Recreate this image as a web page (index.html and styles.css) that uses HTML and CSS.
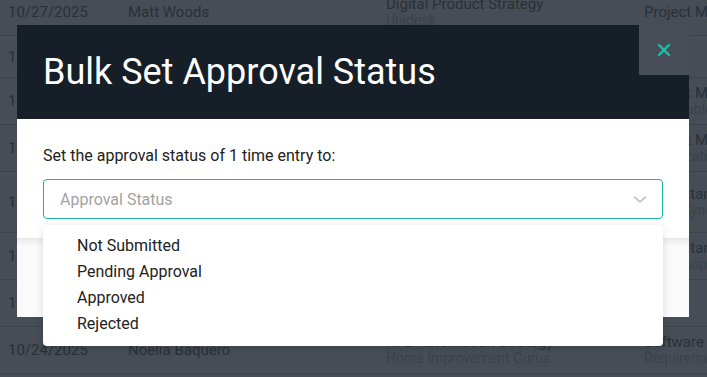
FILE: index.html
```html
<!DOCTYPE html>
<html lang="en">
<head>
    <meta charset="UTF-8">
    <meta name="viewport" content="width=device-width, initial-scale=1.0">
    <title>Time Entries</title>
    <link rel="stylesheet" href="styles.css">
</head>
<body>
    <div class="table">
        <div class="row">
            <div>10/27/2025</div>
            <div>Matt Woods</div>
            <div><div>Digital Product Strategy</div><div class="sub">Unidesk</div></div>
            <div>Project Manager</div>
        </div>
        <div class="row short">
            <div>10/27/2025</div>
            <div>Matt Woods</div>
            <div>Internal</div>
            <div>Leave</div>
        </div>
        <div class="row">
            <div>10/26/2025</div>
            <div>Sara Lindqvist</div>
            <div><div>Platform Migration</div><div class="sub">Northwind</div></div>
            <div><div>Project Manager</div><div class="sub">Deliverables</div></div>
        </div>
        <div class="row">
            <div>10/26/2025</div>
            <div>Sara Lindqvist</div>
            <div><div>Operations Review</div><div class="sub">Contoso Group</div></div>
            <div><div>Project Manager</div><div class="sub">Organization</div></div>
        </div>
        <div class="row tall">
            <div>10/25/2025</div>
            <div>Noelia Baquero</div>
            <div><div>Data Platform Rollout</div><div class="sub">Brightstream</div><div class="sub">Phase 2</div></div>
            <div><div>Consultant</div><div class="sub">Team Sync</div></div>
        </div>
        <div class="row">
            <div>10/25/2025</div>
            <div>Noelia Baquero</div>
            <div><div>Cloud Readiness</div><div class="sub">Fabrikam</div></div>
            <div><div>Consultant</div><div class="sub">Workshop</div></div>
        </div>
        <div class="row">
            <div>10/25/2025</div>
            <div>Noelia Baquero</div>
            <div>Internal</div>
            <div>Admin</div>
        </div>
        <div class="row">
            <div>10/24/2025</div>
            <div>Noelia Baquero</div>
            <div><div>AI &amp; Automation Strategy</div><div class="sub">Home Improvement Gurus</div></div>
            <div><div>Software Engineer</div><div class="sub">Requirements</div></div>
        </div>
    </div>

    <div class="modal">
        <div class="modal-header">
            <h1>Bulk Set Approval Status</h1>
            <button class="close" aria-label="Close">
                <svg width="14" height="14" viewBox="0 0 14 14">
                    <path d="M2 2 L12 12 M12 2 L2 12" stroke="#1dbfae" stroke-width="2.4" stroke-linecap="round"/>
                </svg>
            </button>
        </div>
        <div class="modal-body">
            <p>Set the approval status of 1 time entry to:</p>
            <div class="select">
                <span class="placeholder">Approval Status</span>
                <svg width="14" height="9" viewBox="0 0 14 9">
                    <path d="M1 1.5 L7 7 L13 1.5" fill="none" stroke="#bdbdbd" stroke-width="1.6"/>
                </svg>
                <ul class="menu">
                    <li>Not Submitted</li>
                    <li>Pending Approval</li>
                    <li>Approved</li>
                    <li>Rejected</li>
                </ul>
            </div>
        </div>
        <div class="modal-footer"></div>
    </div>
</body>
</html>
```

FILE: styles.css
```css
body {
    margin: 0;
    font-family: Roboto, "Liberation Sans", sans-serif;
    background: #464d56;
    overflow: hidden;
    height: 377px;
}
.table {
    margin-top: -11px;
    color: #2a3037;
    font-size: 15px;
}
.row {
    display: grid;
    grid-template-columns: 120px 258px 258px 1fr;
    align-items: center;
    height: 46px;
    padding-left: 8px;
    border-bottom: 1px solid #3d444c;
    line-height: 16px;
    white-space: nowrap;
}
.row.short {
    height: 41px;
}
.row.tall {
    height: 60px;
}
.sub {
    color: #3b424a;
    font-size: 14px;
}

.modal {
    position: absolute;
    left: 17px;
    top: 25px;
    width: 672px;
    background: #fff;
}
.modal-header {
    background: #161e28;
    height: 94px;
    display: flex;
    align-items: center;
    padding: 0 26px;
}
.modal-header h1 {
    margin: 0;
    color: #fff;
    font-weight: 400;
    font-size: 36px;
}
.close {
    position: absolute;
    top: 0;
    right: 0;
    width: 50px;
    height: 50px;
    border: none;
    background: #474e57;
    display: flex;
    align-items: center;
    justify-content: center;
    padding: 0;
    cursor: pointer;
}
.modal-body {
    padding: 27px 26px 19px;
}
.modal-body p {
    margin: 0 0 13px;
    font-size: 16px;
    color: #222;
    line-height: 20px;
}
.select {
    position: relative;
    height: 38px;
    border: 1px solid #1ab3a6;
    border-radius: 4px;
    display: flex;
    align-items: center;
    justify-content: space-between;
    padding: 0 15px 0 16px;
}
.placeholder {
    color: #a3a3a3;
    font-size: 16px;
}
.menu {
    position: absolute;
    top: 45px;
    left: -1px;
    right: -1px;
    margin: 0;
    padding: 8px 0 9px 34px;
    list-style: none;
    background: #fff;
    border-radius: 4px;
    box-shadow: 0 2px 8px rgba(0, 0, 0, 0.12);
    z-index: 2;
}
.menu li {
    font-size: 16px;
    line-height: 26px;
    color: #222;
}
.modal-footer {
    height: 79px;
    background: linear-gradient(#e9e9e9, #fafafa 8px, #fafafa);
}
```
